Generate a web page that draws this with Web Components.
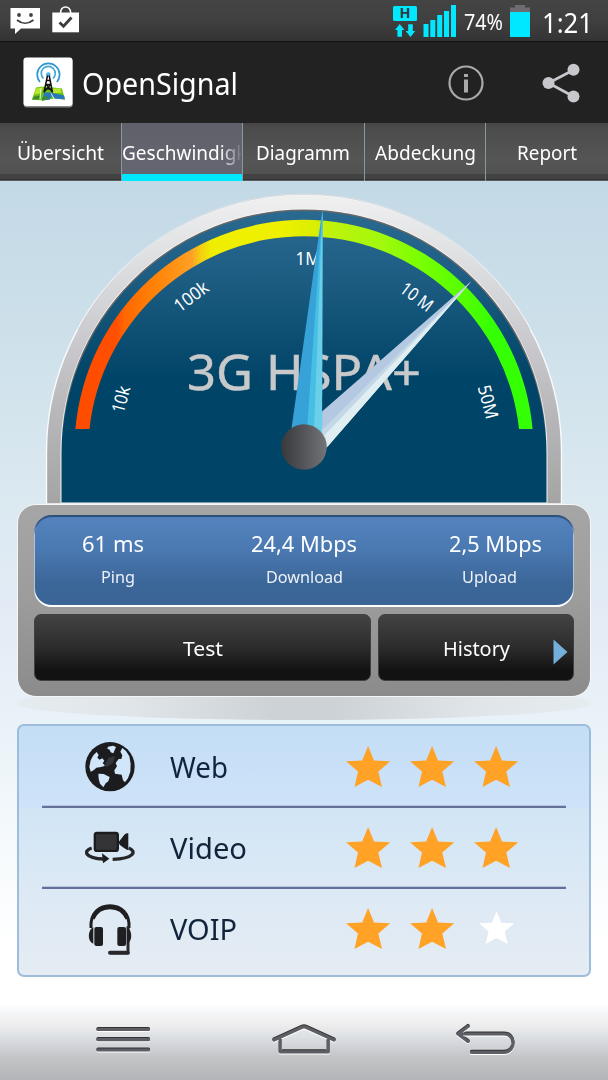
<!DOCTYPE html>
<html lang="de">
<head>
<meta charset="utf-8">
<title>OpenSignal</title>
<style>
    body {
        margin: 0;
        font-family: "Noto Sans", "Open Sans", sans-serif;
        color: white;
        overflow: hidden;
    }
</style>
</head>
<body>
<open-signal-app></open-signal-app>

<script>
class OpenSignalApp extends HTMLElement {
    constructor() {
        super();
        const shadowRoot = this.attachShadow({ mode: 'open' });
        shadowRoot.innerHTML = /*html*/ `
            <style>
                :host {
                    display: flex;
                    flex-direction: column;
                    width: 608px;
                    height: 1080px;
                    background: linear-gradient(#c3d9e6 181px, #cde0ea 330px, #dbe9f1 500px, #e5ecf6 640px, #e9f2f8 720px, #f6fafc 850px, #ffffff 950px);
                }
                rating-panel { margin: 28px 17px 0; }
                nav-bar { margin-top: auto; }
            </style>
            <status-bar></status-bar>
            <action-bar><fit-text width="156">OpenSignal</fit-text></action-bar>
            <tab-bar>
                <tab-item><fit-text width="87">Übersicht</fit-text></tab-item>
                <tab-item selected><fit-text width="147">Geschwindigkeit</fit-text></tab-item>
                <tab-item><fit-text width="94">Diagramm</fit-text></tab-item>
                <tab-item><fit-text width="101">Abdeckung</fit-text></tab-item>
                <tab-item><fit-text width="60">Report</fit-text></tab-item>
            </tab-bar>
            <speed-gauge></speed-gauge>
            <speed-console></speed-console>
            <rating-panel>
                <rating-row icon="web" stars="3"><fit-text width="58">Web</fit-text></rating-row>
                <rating-row icon="video" stars="3"><fit-text width="77">Video</fit-text></rating-row>
                <rating-row icon="voip" stars="2"><fit-text width="67">VOIP</fit-text></rating-row>
            </rating-panel>
            <nav-bar></nav-bar>
        `;
    }
}

class StatusBar extends HTMLElement {
    constructor() {
        super();
        const shadowRoot = this.attachShadow({ mode: 'open' });
        shadowRoot.innerHTML = /*html*/ `
            <style>
                :host {
                    display: flex;
                    align-items: center;
                    justify-content: space-between;
                    box-sizing: border-box;
                    height: 42px;
                    padding: 0 15px 0 10px;
                    background: linear-gradient(#444 0, #404040 20px, #343434 40px);
                    border-bottom: 1px solid #111;
                }
                .side { display: flex; align-items: center; height: 41px; }
                svg { display: block; }
                .percent { font-size: 21px; margin: 3px 7px 0 8px; }
                .clock { font-size: 28px; margin: 2px 0 0 12px; }
            </style>
            <div class="side">
                <svg width="70" height="41" viewBox="10 0 70 41">
                    <path fill="#fff" d="M10.500 8H40V28.500H21L15 34V28.500H10.500Z"/>
                    <circle cx="19" cy="15" r="1.900" fill="#404040"/>
                    <circle cx="31" cy="15" r="1.900" fill="#404040"/>
                    <path d="M17 20Q25 26.500 33.500 20" fill="none" stroke="#404040" stroke-width="1.700"/>
                    <path fill="#fff" d="M52.300 12.500H79V32.300H52.300Z"/>
                    <path d="M60.500 13C61 5 70 5 70.800 13" fill="none" stroke="#fff" stroke-width="1.600"/>
                    <path d="M59.500 22.500L63.500 26.300L71.500 17.500" fill="none" stroke="#3c3c3c" stroke-width="2.800"/>
                </svg>
            </div>
            <div class="side">
                <svg width="64" height="41" viewBox="393 0 64 41">
                    <rect x="394" y="6" width="24" height="15" rx="1.500" fill="#00e8ff"/>
                    <text x="406" y="18" text-anchor="middle" textLength="11" lengthAdjust="spacingAndGlyphs" font-size="13.500" font-weight="700" fill="#2b3b40">H</text>
                    <g fill="#00e8ff">
                        <path d="M400.700 24L405.500 30H403V36.700H398.400V30H396Z"/>
                        <path d="M411.500 37L406.700 31H409.200V24.300H413.800V31H416.300Z"/>
                        <path d="M424.500 24H429.500V37H424.500ZM431.300 20H436.300V37H431.300ZM438.200 15H443.200V37H438.200ZM445 11H450V37H445ZM452 5H457V37H452Z"/>
                    </g>
                </svg>
                <fit-text class="percent" width="39">74%</fit-text>
                <svg width="20" height="41" viewBox="510 0 20 41">
                    <path fill="#6c6c70" d="M515 5H525V7.500H530V12H510V7.500H515Z"/>
                    <path fill="#00e8ff" d="M510 12H530V37H510Z"/>
                </svg>
                <fit-text class="clock" width="51">1:21</fit-text>
            </div>
        `;
    }
}

class ActionBar extends HTMLElement {
    constructor() {
        super();
        const shadowRoot = this.attachShadow({ mode: 'open' });
        shadowRoot.innerHTML = /*html*/ `
            <style>
                :host {
                    display: flex;
                    align-items: center;
                    box-sizing: border-box;
                    height: 81px;
                    padding: 0 28px 0 23px;
                    background: #222;
                    font-size: 30px;
                }
                svg { display: block; }
                ::slotted(*) { margin: 2px 0 0 9px; }
                .info { margin-left: auto; margin-right: 57px; }
            </style>
            <svg width="50" height="54" viewBox="23 55.500 50 54">
                <rect x="23.700" y="58" width="49" height="49" rx="3" fill="#888"/>
                <rect x="23.500" y="57" width="49" height="48.500" rx="3" fill="#fff"/>
                <path fill="#6cc514" d="M36 87L44 86L62 88L65 99L54 98L43 100L32 99Z"/>
                <path fill="#b9e62e" d="M36 88L43 87L40 93L34 94ZM51 88L60 88L62 92L52 93Z"/>
                <path fill="#2878bd" d="M44 92L51 92L64 95L65 99L55 98L51 96L50 99L42 100Z"/>
                <path fill="#3b8e2c" d="M34 96L41 95L39 99L32 99ZM43 96H48L47 99L42 100Z"/>
                <path d="M41 88L40 99M51 93L54 98" stroke="#eff9df" fill="none"/>
                <g fill="none" stroke="#46a8d8" stroke-width="1.700">
                    <path d="M43.500 78A7 7 0 1 1 53 78"/>
                    <path d="M40 81.500A11.200 11.200 0 1 1 56.800 81.500" stroke="#2e98d0"/>
                </g>
                <circle cx="48.300" cy="74" r="2.300" fill="#49b7ee"/>
                <path d="M47.500 75L44 92M49.200 75L52.500 92M46.500 80H50M46 84H51M45 88.500H52M46.300 84L52 91M50.500 84L44.500 91" stroke="#111" stroke-width="1.500" fill="none"/>
            </svg>
            <slot></slot>
            <svg class="info" width="38" height="38" viewBox="447 63.500 38 38">
                <circle cx="466" cy="82.500" r="16.500" fill="none" stroke="#aaa" stroke-width="2.200"/>
                <path d="M464 73.500H468V76.500H464ZM464 79H468V92H464Z" fill="#aaa"/>
            </svg>
            <svg width="38" height="42" viewBox="542 61.500 38 42">
                <path d="M573.500 69.500L548.500 82.500L573.500 96" fill="none" stroke="#c8c8cc" stroke-width="2.700"/>
                <g fill="#c8c8cc">
                    <circle cx="548.500" cy="82.500" r="6"/>
                    <circle cx="573.500" cy="69.300" r="6"/>
                    <circle cx="573.500" cy="95.900" r="6"/>
                </g>
            </svg>
        `;
    }
}

class TabBar extends HTMLElement {
    constructor() {
        super();
        const shadowRoot = this.attachShadow({ mode: 'open' });
        shadowRoot.innerHTML = /*html*/ `
            <style>
                :host {
                    display: grid;
                    grid-template-columns: repeat(5, 1fr);
                    height: 58px;
                    background: linear-gradient(#444 0, #4b4b4b 4px, #555 35px, #525252 51px, #424242 51px, #424242 56px, #222 57px, #8d9ca5 58px);
                }
            </style>
            <slot></slot>
        `;
    }
}

class TabItem extends HTMLElement {
    constructor() {
        super();
        const shadowRoot = this.attachShadow({ mode: 'open' });
        shadowRoot.innerHTML = /*html*/ `
            <style>
                :host {
                    display: flex;
                    justify-content: center;
                    box-sizing: border-box;
                    overflow: hidden;
                    padding-top: 14px;
                    font-size: 19.5px;
                    border-right: 1px solid #8799a5;
                }
                :host(:last-of-type) { border-right: 0; }
                :host([selected]) {
                    justify-content: flex-start;
                    background: linear-gradient(#60606a, #666672 51px, #00e8ff 51px);
                }
                .label { min-width: 0; height: 32px; line-height: 32px; }
                :host([selected]) .label {
                    width: 119px;
                    overflow: hidden;
                    -webkit-mask-image: linear-gradient(90deg, #000 98px, transparent 121px);
                    mask-image: linear-gradient(90deg, #000 98px, transparent 121px);
                }
            </style>
            <div class="label"><slot></slot></div>
        `;
    }
}

class SpeedGauge extends HTMLElement {
    constructor() {
        super();
        const shadowRoot = this.attachShadow({ mode: 'open' });
        shadowRoot.innerHTML = /*html*/ `
            <style>
                :host { display: block; height: 323px; }
                svg { display: block; }
            </style>
            <svg width="608" height="323" viewBox="0 181 608 323">
                <defs>
                    <linearGradient id="rim" x1="0" y1="0" x2="0" y2="1">
                        <stop offset="0" stop-color="#f0f0f1"/>
                        <stop offset=".15" stop-color="#e3e4e6"/>
                        <stop offset=".45" stop-color="#ccccd0"/>
                        <stop offset=".7" stop-color="#b8b8bb"/>
                        <stop offset="1" stop-color="#a4a4a4"/>
                    </linearGradient>
                    <linearGradient id="face" x1="0" y1="0" x2="0" y2="1">
                        <stop offset="0" stop-color="#2a6a90"/>
                        <stop offset=".2" stop-color="#205f85"/>
                        <stop offset=".58" stop-color="#004467"/>
                        <stop offset="1" stop-color="#004467"/>
                    </linearGradient>
                    <linearGradient id="scale" gradientUnits="userSpaceOnUse" x1="75" y1="0" x2="533" y2="0">
                        <stop offset="0" stop-color="#ff4c00"/>
                        <stop offset=".09" stop-color="#ff4f00"/>
                        <stop offset=".11" stop-color="#ff6800"/>
                        <stop offset=".18" stop-color="#ff8508"/>
                        <stop offset=".255" stop-color="#ffa025"/>
                        <stop offset=".275" stop-color="#f4d010"/>
                        <stop offset=".3" stop-color="#f0ee00"/>
                        <stop offset=".45" stop-color="#eef000"/>
                        <stop offset=".52" stop-color="#dcee00"/>
                        <stop offset=".55" stop-color="#c2f20c"/>
                        <stop offset=".67" stop-color="#a2f80c"/>
                        <stop offset=".75" stop-color="#7aff00"/>
                        <stop offset=".86" stop-color="#50ff00"/>
                        <stop offset=".91" stop-color="#35ff05"/>
                        <stop offset="1" stop-color="#35ff05"/>
                    </linearGradient>
                    <linearGradient id="edge" gradientUnits="userSpaceOnUse" x1="0" y1="209" x2="0" y2="452">
                        <stop offset="0" stop-color="#666"/>
                        <stop offset=".6" stop-color="#666"/>
                        <stop offset=".95" stop-color="#666" stop-opacity="0"/>
                    </linearGradient>
                    <linearGradient id="hub">
                        <stop offset="0" stop-color="#39393b"/>
                        <stop offset=".45" stop-color="#505257"/>
                        <stop offset="1" stop-color="#747579"/>
                    </linearGradient>
                </defs>

                <path d="M46.500 504V452A257.500 257.500 0 0 1 561.500 452V504Z" fill="url(#rim)" stroke="#f8fafb" stroke-width="1.400"/>
                <path d="M78 330A256 256 0 0 1 530 330" fill="none" stroke="#aaa" stroke-opacity=".55" stroke-width=".8"/>
                <path d="M60.500 503.500V452A243.500 243.500 0 0 1 547.500 452V503.500Z" fill="#f5f5f5"/>
                <path d="M61.500 502.500V452.500A242.500 242.500 0 0 1 546.500 452.500V502.500Z" fill="url(#face)"/>
                <path d="M61.700 452.500A242.300 242.300 0 0 1 546.300 452.500" fill="none" stroke="url(#edge)" stroke-width="1.400"/>
                <path d="M75.400 429A229.500 229.500 0 0 1 532.600 429H519A216 216 0 0 0 89.500 429Z" fill="url(#scale)"/>

                <g fill="#fff" font-size="18" text-anchor="middle">
                    <text transform="translate(127 401) rotate(-75)" textLength="27" lengthAdjust="spacingAndGlyphs">10k</text>
                    <text transform="translate(195 301.500) rotate(-37)" textLength="38" lengthAdjust="spacingAndGlyphs">100k</text>
                    <text x="308" y="264.500" textLength="25" lengthAdjust="spacingAndGlyphs">1M</text>
                    <text transform="translate(413 302) rotate(37)" textLength="36" lengthAdjust="spacingAndGlyphs">10 M</text>
                    <text transform="translate(482 403.500) rotate(75)" textLength="34" lengthAdjust="spacingAndGlyphs">50M</text>
                </g>
                <text x="187" y="389.500" font-size="49.500" fill="#c8c9cb" stroke="#c8c9cb" stroke-width=".5" textLength="234" lengthAdjust="spacingAndGlyphs">3G HSPA+</text>

                <path d="M471.500 281L318 415L319 455L328 446Z" fill="#b4c8e2"/>
                <path d="M471.500 281L318 434L320 452L328 446Z" fill="#c3d8e6"/>
                <path d="M471.500 281L321 439L322 451L328 446Z" fill="#e0eef2"/>
                <path d="M322.500 209L291 432L300 450L322 440Z" fill="#37a2d7"/>
                <path d="M322.500 209L307 430V445L322 440Z" fill="#45bfe4"/>
                <path d="M322.500 209L314 430V442L322 440Z" fill="#6bcfe9"/>
                <circle cx="304" cy="447" r="22.800" fill="url(#hub)"/>
            </svg>
        `;
    }
}

class SpeedConsole extends HTMLElement {
    constructor() {
        super();
        const shadowRoot = this.attachShadow({ mode: 'open' });
        shadowRoot.innerHTML = /*html*/ `
            <style>
                :host {
                    display: block;
                    position: relative;
                    height: 192px;
                }
                .shadow {
                    position: absolute;
                    left: 17px;
                    top: 182px;
                    width: 574px;
                    height: 34px;
                    border-radius: 50%;
                    background: linear-gradient(90deg, #e5ecf0, #e0e5e9 20%, #cdd2d7 45%, #cdd2d7 55%, #e0e5e9 80%, #e5ecf0);
                }
                .body {
                    position: relative;
                    box-sizing: border-box;
                    height: 193px;
                    margin: 0 17px;
                    padding: 10px 16px 14px;
                    border: 1px solid #f4f6f7;
                    border-radius: 19px;
                    background: linear-gradient(#a6a6a6, #9c9c9c 50%, #8b8b8b);
                }
                .stats {
                    display: grid;
                    grid-template-columns: repeat(3, 1fr);
                    box-sizing: border-box;
                    height: 92px;
                    padding-top: 13px;
                    border-radius: 18px;
                    background: linear-gradient(#5584be, #4b79b2 35%, #3b6698 75%, #3a6595);
                    box-shadow: inset 0 2px 1px #2d4f7a, inset 0 -2px 0 #fff, inset 1px -1px 0 #c5cfdb, inset -1px -1px 0 #c5cfdb;
                }
                .buttons {
                    display: grid;
                    grid-template-columns: 337px 196px;
                    justify-content: space-between;
                    height: 67px;
                    margin-top: 7px;
                }
            </style>
            <div class="shadow"></div>
            <div class="body">
                <div class="stats">
                    <speed-stat>
                        <fit-text slot="value" width="62" style="margin-right: 23px">61 ms</fit-text>
                        <fit-text width="34" style="margin-right: 12px">Ping</fit-text>
                    </speed-stat>
                    <speed-stat>
                        <fit-text slot="value" width="106">24,4 Mbps</fit-text>
                        <fit-text width="77">Download</fit-text>
                    </speed-stat>
                    <speed-stat>
                        <fit-text slot="value" width="93" style="margin-left: 22px">2,5 Mbps</fit-text>
                        <fit-text width="55" style="margin-left: 11px">Upload</fit-text>
                    </speed-stat>
                </div>
                <div class="buttons">
                    <console-button><fit-text width="40">Test</fit-text></console-button>
                    <console-button arrow><fit-text width="67">History</fit-text></console-button>
                </div>
            </div>
        `;
    }
}

class SpeedStat extends HTMLElement {
    constructor() {
        super();
        const shadowRoot = this.attachShadow({ mode: 'open' });
        shadowRoot.innerHTML = /*html*/ `
            <style>
                :host {
                    display: flex;
                    flex-direction: column;
                    align-items: center;
                }
                .value { font-size: 21.500px; line-height: 31px; }
                .label { font-size: 17px; line-height: 24px; margin-top: 6px; color: #eef2f8; }
            </style>
            <div class="value"><slot name="value"></slot></div>
            <div class="label"><slot></slot></div>
        `;
    }
}

class ConsoleButton extends HTMLElement {
    constructor() {
        super();
        const shadowRoot = this.attachShadow({ mode: 'open' });
        shadowRoot.innerHTML = /*html*/ `
            <style>
                :host {
                    display: flex;
                    align-items: center;
                    justify-content: center;
                    position: relative;
                    box-sizing: border-box;
                    padding-top: 2px;
                    border: 1.500px solid #3c4144;
                    border-radius: 7px;
                    background: linear-gradient(#434343, #2c2c2c 50%, #121212 85%);
                    font-size: 20px;
                }
                svg { display: none; position: absolute; right: 5px; top: 24px; }
                :host([arrow]) svg { display: block; }
            </style>
            <slot></slot>
            <svg width="15" height="26" viewBox="0 0 15 26"><path d="M.500 .500L14.500 13L.500 25.500Z" fill="#74aeda"/></svg>
        `;
    }
}

class RatingPanel extends HTMLElement {
    constructor() {
        super();
        const shadowRoot = this.attachShadow({ mode: 'open' });
        shadowRoot.innerHTML = /*html*/ `
            <style>
                :host {
                    display: block;
                    box-sizing: border-box;
                    height: 253px;
                    padding: 1px 23px 0;
                    border: 2px solid #9dbddb;
                    border-radius: 7px;
                    background: linear-gradient(#c3def5, #cee3fa 81px, #d1e5f5 83px, #dce9f5 160px, #e5ecf3 250px);
                }
            </style>
            <slot></slot>
        `;
    }
}

// Icons are drawn on a 150 x 156 grid
const ICONS = {
    web: `
        <circle cx="75" cy="77" r="74" fill="#1c1c1e"/>
        <g fill="#d2e6fa">
            <path d="M35 33L41 42L37 50L44 56L52 52L58 59L53 67L61 74L48 78L34 80L26 88L17 92L13 78L17 58L25 43Z"/>
            <path d="M69 17L84 14L93 18L85 37L77 34L74 26L67 23Z"/>
            <path d="M112 21L123 30L133 46L137 68L136 92L129 112L120 124L114 118L110 101L90 98L88 88L96 76L92 66L101 54L109 54L112 43L106 32Z"/>
            <path d="M40 98L56 99L74 108L70 121L62 127L55 139L45 128L41 113Z"/>
        </g>
        <path fill="#363638" d="M70 50L90 46L84 66L66 78L58 74Z"/>`,
    video: `
        <g fill="#1c1c1e">
            <rect x="26" y="29" width="76" height="61" rx="10"/>
            <path d="M101 60L118 38Q124 33 130 34V84Q122 83 104 68Z"/>
            <path d="M51 94L73 110L54 124Z"/>
        </g>
        <rect x="33" y="37" width="62" height="46" rx="3" fill="#343436"/>
        <path d="M20 78C-6 86 -2 109 56 111M131 78C156 88 148 110 83 112" fill="none" stroke="#262628" stroke-width="10"/>`,
    voip: `
        <path d="M18 75C15 30 42 8 75 8C108 8 135 30 132 75" fill="none" stroke="#1f1f21" stroke-width="9"/>
        <path d="M24 48C34 24 52 14 75 14C98 14 116 24 126 48" fill="none" stroke="#1f1f21" stroke-width="9"/>
        <path d="M129 70V149H76" fill="none" stroke="#28282a" stroke-width="9"/>
        <path d="M75 149H128" stroke="#28282a" stroke-width="12" stroke-linecap="round"/>
        <g fill="#1f1f21">
            <rect x="28" y="72" width="26" height="57" rx="6"/>
            <rect x="97" y="72" width="26" height="57" rx="6"/>
            <path d="M25 73V122C6 116 8 80 25 73ZM126 73V122C144 116 142 80 126 73Z"/>
        </g>`
};

class RatingRow extends HTMLElement {
    constructor() {
        super();
        const icon = this.getAttribute('icon');
        const count = Number(this.getAttribute('stars'));
        const shadowRoot = this.attachShadow({ mode: 'open' });
        shadowRoot.innerHTML = /*html*/ `
            <style>
                :host {
                    display: grid;
                    grid-template-columns: 85px 176px auto;
                    align-items: center;
                    box-sizing: border-box;
                    height: 81px;
                    padding-left: 42.500px;
                    font-size: 28.500px;
                    color: #11243c;
                    background: linear-gradient(#b4c6df, #b4c6df) 0 77.500px / 100% 1px no-repeat;
                    border-bottom: 2px solid #64729b;
                }
                :host(:last-of-type) { border-bottom-color: transparent; background: none; }
                svg { display: block; }
                .stars { display: flex; gap: 19.800px; }
            </style>
            <svg width="50" height="52" viewBox="0 0 150 156">${ICONS[icon]}</svg>
            <slot></slot>
            <div class="stars">
                ${[0, 1, 2].map(i => `<star-mark ${i < count ? 'filled' : ''}></star-mark>`).join('')}
            </div>
        `;
    }
}

class StarMark extends HTMLElement {
    constructor() {
        super();
        const shadowRoot = this.attachShadow({ mode: 'open' });
        shadowRoot.innerHTML = /*html*/ `
            <style>
                :host { display: block; width: 44.300px; height: 41px; }
                svg { display: block; fill: white; transform: translate(.5px, -1px) scale(.8); }
                :host([filled]) svg { fill: #ffa226; transform: none; }
            </style>
            <svg width="44.300" height="41" viewBox="0 0 44.300 41">
                <path d="M22.100 0L28 14.500L44.300 15.300L32.300 25.500L36 41L22.100 33.700L8.500 41L12 25.500L0 15.300L16.200 14.500Z"/>
            </svg>
        `;
    }
}

class NavBar extends HTMLElement {
    constructor() {
        super();
        const shadowRoot = this.attachShadow({ mode: 'open' });
        shadowRoot.innerHTML = /*html*/ `
            <style>
                :host {
                    display: flex;
                    justify-content: space-between;
                    box-sizing: border-box;
                    height: 76px;
                    padding: 16px 90px 0 94px;
                    background: linear-gradient(#fff, #f6f7f8 8px, #ececed 22px, #dde1e3 32px, #d0d2d8 43px, #c4c5c7 53px, #b4b5b8 74px);
                }
                svg {
                    display: block;
                    fill: none;
                    stroke: #5d5d65;
                    stroke-width: 3.2;
                    stroke-linecap: round;
                    stroke-linejoin: round;
                    filter: drop-shadow(0 1.5px 0 white) drop-shadow(0 -.5px 0 #333);
                }
            </style>
            <svg width="60" height="40" viewBox="94 1020 60 40"><path d="M98 1029.500H148.500M98 1039.700H148.500M98 1050H148.500"/></svg>
            <svg width="66" height="40" viewBox="272 1020 66 40"><path d="M274 1040L302 1027.300Q304 1026.300 306 1027.300L334 1040M280.200 1040V1051.800H328.300V1040"/></svg>
            <svg width="62" height="40" viewBox="456 1020 62 40"><path d="M468 1026.500L458 1034L468 1041.500M459 1034H504C516 1034 516 1052.300 504 1052.300H471.500"/></svg>
        `;
    }
}

// Condenses or stretches one line of text to the given width
class FitText extends HTMLElement {
    constructor() {
        super();
        const shadowRoot = this.attachShadow({ mode: 'open' });
        shadowRoot.innerHTML = /*html*/ `
            <style>
                :host { display: inline-block; white-space: nowrap; }
                span { display: inline-block; transform-origin: left center; }
            </style>
            <span><slot></slot></span>
        `;
    }

    connectedCallback() {
        const span = this.shadowRoot.querySelector('span');
        const width = Number(this.getAttribute('width'));
        const natural = span.getBoundingClientRect().width;
        this.style.width = width + 'px';
        if (natural) span.style.transform = `scaleX(${width / natural})`;
    }
}

customElements.define('open-signal-app', OpenSignalApp);
customElements.define('status-bar', StatusBar);
customElements.define('action-bar', ActionBar);
customElements.define('tab-bar', TabBar);
customElements.define('tab-item', TabItem);
customElements.define('speed-gauge', SpeedGauge);
customElements.define('speed-console', SpeedConsole);
customElements.define('speed-stat', SpeedStat);
customElements.define('console-button', ConsoleButton);
customElements.define('rating-panel', RatingPanel);
customElements.define('rating-row', RatingRow);
customElements.define('star-mark', StarMark);
customElements.define('nav-bar', NavBar);
customElements.define('fit-text', FitText);
</script>
</body>
</html>
